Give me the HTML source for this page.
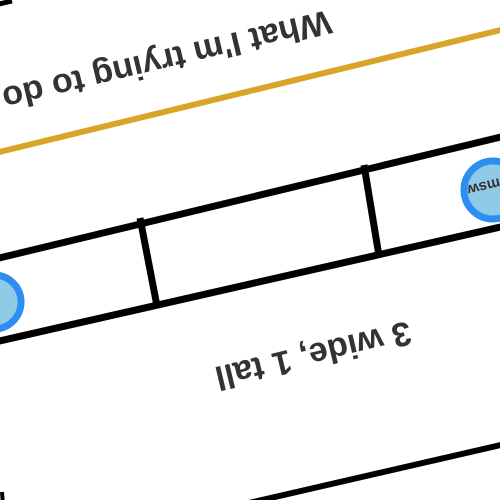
<!DOCTYPE html>
<html><head><style>html,body{margin:0;padding:0;background:#fff;width:500px;height:500px;overflow:hidden}</style></head>
<body>
<svg width="500" height="500" viewBox="0 0 500 500" xmlns="http://www.w3.org/2000/svg">
<rect width="500" height="500" fill="#fff"/>
<line x1="-5" y1="5" x2="12" y2="1" stroke="#000" stroke-width="5"/>
<line x1="-5" y1="153" x2="505" y2="29" stroke="#d9a528" stroke-width="6"/>
<line x1="-5" y1="259" x2="505" y2="136" stroke="#000" stroke-width="7"/>
<line x1="-5" y1="342" x2="505" y2="226" stroke="#000" stroke-width="7"/>
<line x1="140" y1="218" x2="157" y2="306" stroke="#000" stroke-width="7"/>
<line x1="364" y1="165" x2="379" y2="256" stroke="#000" stroke-width="7"/>
<line x1="240" y1="505" x2="505" y2="444" stroke="#000" stroke-width="6"/>
<line x1="2" y1="492" x2="3" y2="505" stroke="#000" stroke-width="4"/>
<circle cx="493" cy="190" r="29" fill="#8fcbe6" stroke="#2b8ef0" stroke-width="7"/>
<circle cx="-6" cy="302" r="27" fill="#8fcbe6" stroke="#2b8ef0" stroke-width="7"/>
<text transform="translate(499,178) rotate(166.5)" font-family="Liberation Sans, sans-serif" font-size="15" font-weight="bold" fill="#333">msw</text>
<text transform="translate(328,10) rotate(166.5)" font-family="Liberation Sans, sans-serif" font-size="34" font-weight="bold" fill="#333">What I'm trying to do</text>
<text transform="translate(408,321) rotate(166.5)" font-family="Liberation Sans, sans-serif" font-size="34" font-weight="bold" fill="#333">3 wide, 1 tall</text>
</svg>
</body></html>
